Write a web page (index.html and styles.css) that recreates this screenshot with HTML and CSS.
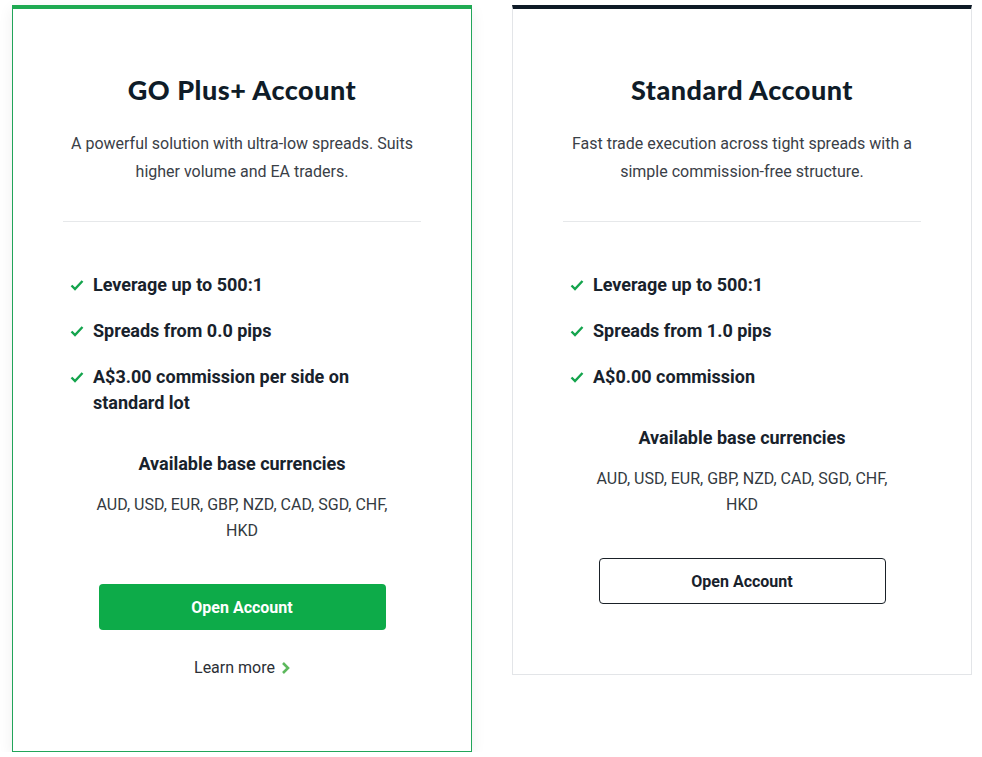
FILE: index.html
```html
<!DOCTYPE html>
<html>
<head>
<meta charset="utf-8">
<link rel="stylesheet" href="styles.css">
</head>
<body>
<div class="cards">
  <div class="card card-plus">
    <h2 class="title">GO Plus+ Account</h2>
    <p class="desc">A powerful solution with ultra-low spreads. Suits higher volume and EA traders.</p>
    <hr class="divider">
    <ul class="features">
      <li><svg class="check" viewBox="0 0 14 12"><path d="M1.5 6.5 L5 10 L12.5 2" fill="none" stroke="#14a44d" stroke-width="2.4"/></svg><span>Leverage up to 500:1</span></li>
      <li><svg class="check" viewBox="0 0 14 12"><path d="M1.5 6.5 L5 10 L12.5 2" fill="none" stroke="#14a44d" stroke-width="2.4"/></svg><span>Spreads from 0.0 pips</span></li>
      <li><svg class="check" viewBox="0 0 14 12"><path d="M1.5 6.5 L5 10 L12.5 2" fill="none" stroke="#14a44d" stroke-width="2.4"/></svg><span>A$3.00 commission per side on standard lot</span></li>
    </ul>
    <h3 class="cur-title">Available base currencies</h3>
    <p class="cur">AUD, USD, EUR, GBP, NZD, CAD, SGD, CHF, HKD</p>
    <a class="btn btn-green" href="#">Open Account</a>
    <a class="learn" href="#">Learn more <svg class="chev" viewBox="0 0 9 14"><path d="M2 2 L7 7 L2 12" fill="none" stroke="#5cb85c" stroke-width="2.6"/></svg></a>
  </div>
  <div class="card card-std">
    <h2 class="title">Standard Account</h2>
    <p class="desc">Fast trade execution across tight spreads with a simple commission-free structure.</p>
    <hr class="divider">
    <ul class="features">
      <li><svg class="check" viewBox="0 0 14 12"><path d="M1.5 6.5 L5 10 L12.5 2" fill="none" stroke="#14a44d" stroke-width="2.4"/></svg><span>Leverage up to 500:1</span></li>
      <li><svg class="check" viewBox="0 0 14 12"><path d="M1.5 6.5 L5 10 L12.5 2" fill="none" stroke="#14a44d" stroke-width="2.4"/></svg><span>Spreads from 1.0 pips</span></li>
      <li><svg class="check" viewBox="0 0 14 12"><path d="M1.5 6.5 L5 10 L12.5 2" fill="none" stroke="#14a44d" stroke-width="2.4"/></svg><span>A$0.00 commission</span></li>
    </ul>
    <h3 class="cur-title">Available base currencies</h3>
    <p class="cur">AUD, USD, EUR, GBP, NZD, CAD, SGD, CHF, HKD</p>
    <a class="btn btn-outline" href="#">Open Account</a>
  </div>
</div>
</body>
</html>
```
FILE: styles.css
```css
html, body {
  margin: 0;
  padding: 0;
  background: #ffffff;
}
body {
  font-family: Roboto, "Liberation Sans", Arial, sans-serif;
  color: #2b3036;
}
.cards {
  display: flex;
  align-items: flex-start;
  gap: 40px;
  padding: 5px 0 0 12px;
}
.card {
  width: 460px;
  box-sizing: border-box;
  background: #fff;
  display: flex;
  flex-direction: column;
  align-items: center;
  padding: 64px 50px 70px;
}
.card-plus {
  border: 1px solid #22a55a;
  border-top: 4px solid #1faa52;
  box-shadow: 0 4px 14px rgba(0,0,0,0.07);
  padding-bottom: 71px;
}
.card-std {
  border: 1px solid #e3e5e8;
  border-top: 4px solid #0e1a26;
}
.title {
  margin: 0;
  font-family: Lato, "Noto Sans", sans-serif;
  font-weight: 900;
  font-size: 27px;
  line-height: 34px;
  color: #0f1c28;
  letter-spacing: 0.5px;
}
.desc {
  margin: 23px 0 0;
  text-align: center;
  font-size: 16px;
  line-height: 28px;
  color: #3a4047;
}
.divider {
  width: 100%;
  border: 0;
  border-top: 1px solid #e6e8ea;
  margin: 35px 0 0;
}
.features {
  list-style: none;
  margin: 50px 0 0;
  padding: 0 0 0 7px;
  width: 100%;
  box-sizing: border-box;
  display: flex;
  flex-direction: column;
  gap: 20px;
}
.features li {
  display: flex;
  align-items: flex-start;
  gap: 9px;
  font-weight: 700;
  font-size: 18px;
  line-height: 26px;
  color: #18222c;
}
.check {
  width: 14px;
  height: 12px;
  flex: none;
  margin-top: 7px;
}
.cur-title {
  margin: 35px 0 0;
  font-size: 18px;
  line-height: 26px;
  font-weight: 700;
  color: #18222c;
}
.cur {
  margin: 15px 0 0;
  max-width: 300px;
  text-align: center;
  font-size: 16px;
  line-height: 26px;
  color: #333a41;
}
.btn {
  display: flex;
  align-items: center;
  justify-content: center;
  width: 287px;
  height: 46px;
  box-sizing: border-box;
  margin-top: 40px;
  border-radius: 4px;
  font-weight: 700;
  font-size: 16px;
  text-decoration: none;
}
.btn-green {
  background: #0dab49;
  color: #ffffff;
}
.btn-outline {
  border: 1px solid #1a2128;
  color: #18222c;
  background: #fff;
}
.learn {
  margin-top: 26px;
  display: flex;
  align-items: center;
  gap: 6px;
  font-size: 16px;
  line-height: 24px;
  color: #2b3036;
  text-decoration: none;
}
.chev {
  width: 9px;
  height: 14px;
}
```
